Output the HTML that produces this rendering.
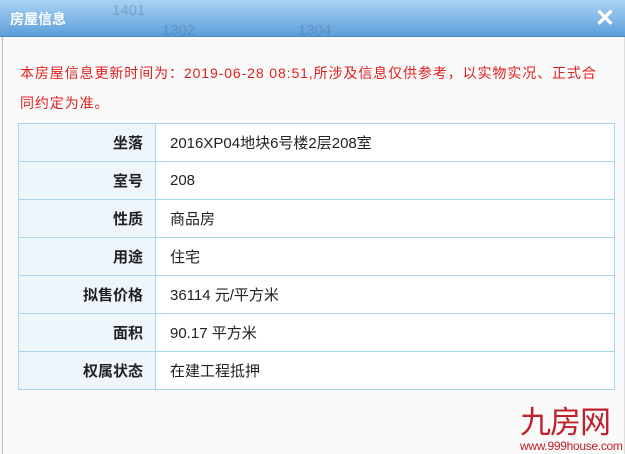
<!DOCTYPE html><html><head><meta charset="utf-8"><style>
body{margin:0;width:625px;height:454px;overflow:hidden;background:#f7f7f7;font-family:"Liberation Sans","Noto Sans CJK SC",sans-serif;position:relative}
.hd{position:absolute;left:0;top:0;width:625px;height:36px;background:linear-gradient(#a9d3f3,#5d9fdb);border-bottom:1px solid #4a86c0}
.hd .t{position:absolute;left:10px;top:9px;color:#fff;font-size:14px;font-weight:bold}
.hd .x{position:absolute;right:10px;top:4px;color:#fff;font-size:24px;font-weight:bold}
.ghost{position:absolute;color:rgba(60,90,130,.3);font-size:15px}
.win{position:absolute;left:2px;top:37px;width:621px;height:417px;background:#fafafa;border-left:1px solid #bbb;border-right:1px solid #ddd}
.msg{position:absolute;left:20px;top:58px;width:610px;color:#e02020;font-size:14px;line-height:30px;letter-spacing:0.9px;white-space:nowrap}
table{position:absolute;left:18px;top:123px;width:597px;border-collapse:collapse;font-size:15px}
td{border:1px solid #a8d4ee;height:37px;padding:0}
td.l{width:124px;background:#eef5fb;text-align:right;padding-right:12px;font-weight:bold;color:#222}
td.v{padding-left:14px;background:#fff;color:#222}
.logo{position:absolute;left:520px;top:404px;color:#c0202a;font-size:31px;font-family:"Noto Sans CJK SC",sans-serif;letter-spacing:-1px;line-height:32px}
.url{position:absolute;left:520px;top:439px;color:#c0202a;font-size:12px;letter-spacing:-0.3px}
</style></head><body>
<div class="hd"><span class="ghost" style="left:112px;top:2px">1401</span><span class="ghost" style="left:162px;top:22px">1302</span><span class="ghost" style="left:298px;top:22px">1304</span><span class="t">房屋信息</span><span class="x">✕</span></div>
<div class="win"></div>
<div class="msg">本房屋信息更新时间为：2019-06-28 08:51,所涉及信息仅供参考，以实物实况、正式合<br>同约定为准。</div>
<table>
<tr><td class="l">坐落</td><td class="v">2016XP04地块6号楼2层208室</td></tr>
<tr><td class="l">室号</td><td class="v">208</td></tr>
<tr><td class="l">性质</td><td class="v">商品房</td></tr>
<tr><td class="l">用途</td><td class="v">住宅</td></tr>
<tr><td class="l">拟售价格</td><td class="v">36114 元/平方米</td></tr>
<tr><td class="l">面积</td><td class="v">90.17 平方米</td></tr>
<tr><td class="l">权属状态</td><td class="v">在建工程抵押</td></tr>
</table>
<div class="logo">九房网</div>
<div class="url">www.999house.com</div>
</body></html>
